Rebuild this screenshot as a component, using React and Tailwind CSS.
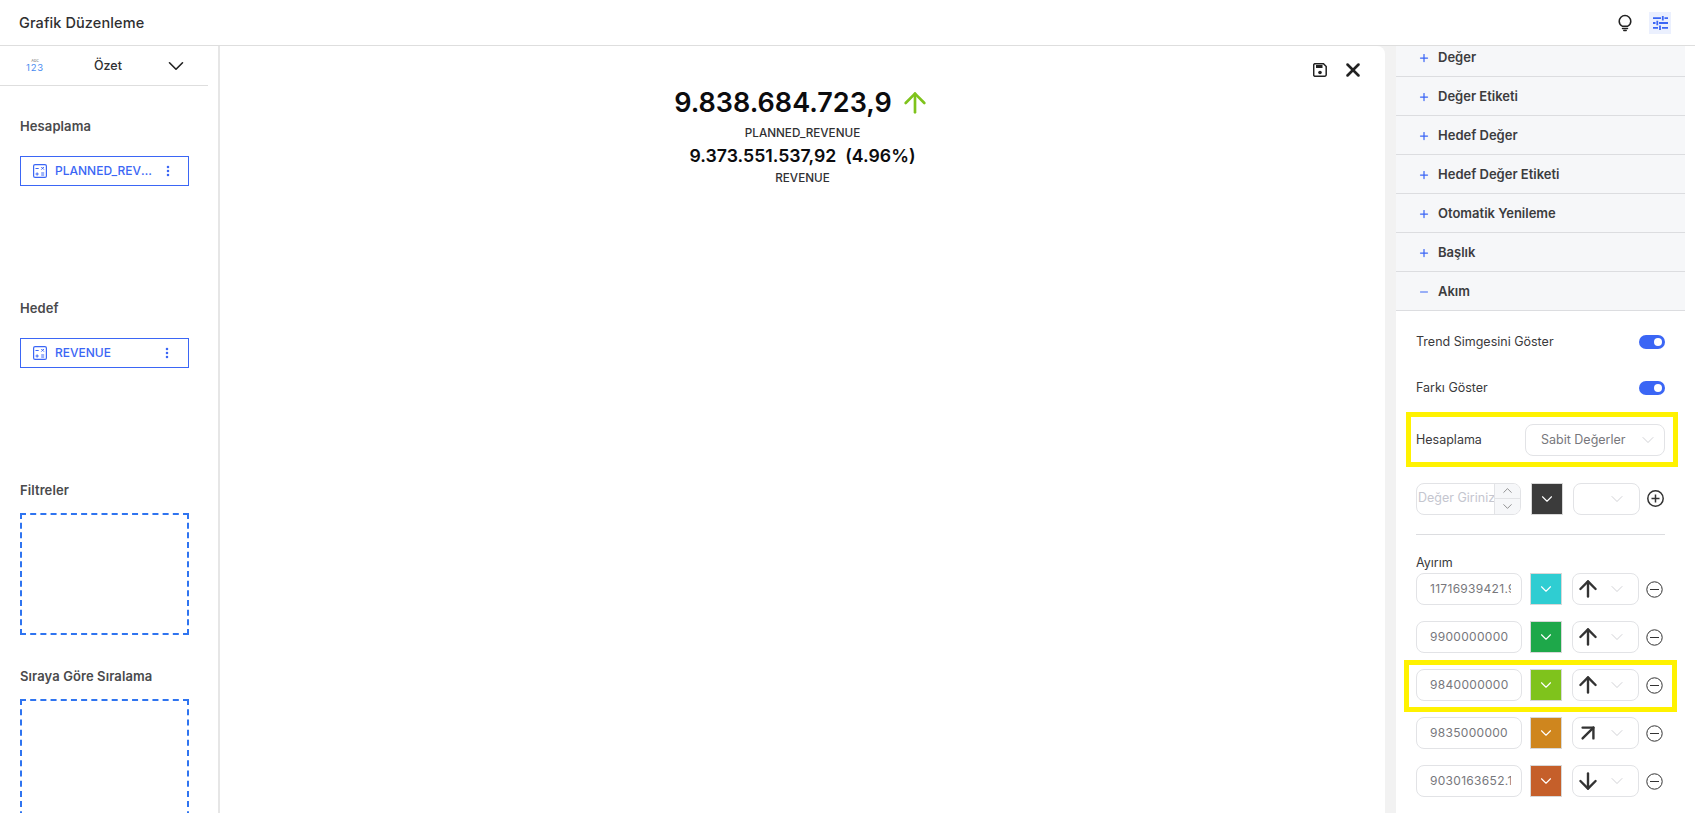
import React from 'react';
import { ChevronDown, Plus, Minus, ArrowUp, ArrowUpRight, ArrowDown, X, EllipsisVertical, ChevronUp } from 'lucide-react';

const CalcIcon = () => (
  <svg width="14" height="14" viewBox="0 0 14 14" fill="none" stroke="#3b66f5" strokeWidth="1">
    <rect x="0.6" y="0.6" width="12.8" height="12.8" rx="1.5" strokeWidth="1.2" />
    <path d="M2.5 4.5h3.200M8.300 3l2.600 2.600M10.900 3l-2.600 2.600M2.500 10h3.200M4.100 8.400v3.200M8.200 9h3M8.200 11h3" />
  </svg>
);

const BulbIcon = () => (
  <svg width="16" height="18" viewBox="0 0 16 18" fill="none" stroke="#222" strokeWidth="1.5">
    <path d="M5.200 12.200C3.400 11.200 2.200 9.400 2.200 7.300a5.800 5.800 0 0 1 11.600 0c0 2.100-1.200 3.900-3 4.900z" />
    <path d="M5.500 14.400h5M6.800 16.400h2.400" strokeLinecap="round" />
  </svg>
);

const TuneIcon = () => (
  <svg width="15" height="14" viewBox="0 0 15 14" fill="none" stroke="#3b66f5" strokeWidth="1.800">
    <path d="M0 2.200h8M11.500 2.200h3.500M9.800 0v4.400M0 7h2.500M6 7h9M4.300 4.800v4.400M0 11.800h5M9 11.800h6M7 9.600v4.400" />
  </svg>
);

const SaveIcon = () => (
  <svg width="14" height="14" viewBox="0 0 14 14" fill="none">
    <path d="M1.500 0.800h9l2.700 2.700v8.200a1.500 1.500 0 0 1-1.500 1.500h-10.200a1.500 1.500 0 0 1-0.800-1.500v-9.400a1.500 1.500 0 0 1 0.800-1.500z" stroke="#222" strokeWidth="1.500" />
    <path d="M3 2h6.500v3h-6.500z" fill="#222" />
    <circle cx="7" cy="9.500" r="1.800" fill="#222" />
  </svg>
);

const RoundIcon = ({ plus }) => (
  <svg width="17" height="17" viewBox="0 0 17 17" fill="none" stroke="#333" strokeWidth={plus ? 1.5 : 1}>
    <circle cx="8.500" cy="8.500" r="7.700" />
    <path d={plus ? 'M4.500 8.500h8M8.500 4.500v8' : 'M4 8.500h9'} />
  </svg>
);

const Accordion = ({ label, open, className }) => (
  <div className={`flex items-center border-b border-[#dcdde0] pl-[22px] ${className}`}>
    {open ? <Minus size={12} color="#3b66f5" strokeWidth={2} /> : <Plus size={12} color="#3b66f5" strokeWidth={2.500} />}
    <span className="ml-[8px] text-[13px] font-semibold text-[#3c3c3e]">{label}</span>
  </div>
);

const ThresholdRow = ({ value, color, Icon }) => (
  <div className="flex items-center h-[32px] mb-[16px]">
    <div className="w-[106px] h-[32px] border border-[#e2e3e6] rounded-[8px] flex items-center pl-[13px] pr-[10px] text-[12px] tracking-[0.3px] text-[#77777c] whitespace-nowrap">
      <span className="block overflow-hidden">{value}</span>
    </div>
    <div className={`ml-[8px] w-[32px] h-[32px] border border-[#d8d8d8] flex items-center justify-center ${color}`}>
      <ChevronDown size={18} color="#fff" strokeWidth={1.500} />
    </div>
    <div className="ml-[10px] w-[67px] h-[32px] border border-[#e2e3e6] rounded-[8px] flex items-center pl-[2px]">
      <Icon size={26} color="#333" strokeWidth={2.200} />
      <ChevronDown className="ml-[6px]" size={20} color="#c8c9ce" strokeWidth={1} />
    </div>
    <div className="ml-[7px]"><RoundIcon /></div>
  </div>
);

const Field = ({ label, className, children }) => (
  <div className={className}>
    <div className="text-[13px] font-semibold text-[#4a4a4c] leading-[20px] tracking-[0.1px]">{label}</div>
    {children}
  </div>
);

const ValueBox = ({ label, dotsClass }) => (
  <div className="mt-[20px] w-[169px] h-[30px] border border-[#3b66f5] flex items-center pl-[12px] text-[#3b66f5]">
    <CalcIcon />
    <span className="ml-[8px] text-[12px] font-medium w-[101px] truncate">{label}</span>
    <EllipsisVertical className={dotsClass} size={14} strokeWidth={2.400} />
  </div>
);

const DashedBox = ({ className }) => (
  <div className={`mt-[13px] w-[169px] border-2 border-dashed border-[#2f74f0] ${className}`} />
);

const App = () => {
  return (
    <div className="w-[1695px] h-[813px] overflow-hidden bg-white flex flex-col font-['Inter','Liberation_Sans',sans-serif]">
      <header className="h-[46px] shrink-0 border-b border-[#dedede] flex items-center pl-[19px] pr-[24px]">
        <h1 className="text-[14.500px] font-medium text-[#2f2f31] tracking-[0.1px]">Grafik Düzenleme</h1>
        <div className="ml-auto flex items-center gap-[16px]">
          <BulbIcon />
          <div className="w-[22px] h-[22px] bg-[#ebf0fe] flex items-center justify-center"><TuneIcon /></div>
        </div>
      </header>

      <div className="flex flex-1 min-h-0">
        <aside className="w-[220px] shrink-0 border-r-2 border-[#e6e6e6] overflow-hidden">
          <div className="w-[208px] h-[40px] border-b border-[#dedede] flex items-center">
            <div className="ml-[26px] w-[18px] flex flex-col items-center leading-none text-[#4a8cf0]">
              <span className="text-[4px] text-[#777]">Abc</span>
              <span className="text-[9.500px] tracking-[0.8px]">123</span>
            </div>
            <span className="ml-[50px] w-[69px] pt-[2px] text-[12.500px] font-medium text-[#303032]">Özet</span>
            <ChevronDown size={26} color="#222" strokeWidth={1.500} />
          </div>
          <div className="pl-[20px]">
            <Field label="Hesaplama" className="mt-[30px] h-[182px]">
              <ValueBox label="PLANNED_REVENUE" dotsClass="ml-[5px]" />
            </Field>
            <Field label="Hedef" className="h-[182px]">
              <ValueBox label="REVENUE" dotsClass="ml-[4px]" />
            </Field>
            <Field label="Filtreler" className="h-[186px]">
              <DashedBox className="h-[122px]" />
            </Field>
            <Field label="Sıraya Göre Sıralama">
              <DashedBox className="h-[200px]" />
            </Field>
          </div>
        </aside>

        <div className="flex-1 flex bg-[#f2f2f2] pr-[11px]">
          <main className="flex-1 relative bg-white rounded-tr-[8px] flex flex-col items-center pt-[36px]">
            <div className="flex items-center h-[42px]">
              <span className="text-[27px] font-semibold text-[#0c0c0e]">9.838.684.723,9</span>
              <ArrowUp className="ml-[7px]" size={32} color="#7fc31c" strokeWidth={2} />
            </div>
            <div className="text-[11.700px] font-medium text-[#303032] leading-[18px]">PLANNED_REVENUE</div>
            <div className="mt-[1px] text-[17.700px] font-semibold text-[#0c0c0e] leading-[26px]">9.373.551.537,92&nbsp; (4.96%)</div>
            <div className="text-[11.700px] font-medium text-[#303032] leading-[18px]">REVENUE</div>
            <div className="absolute top-[13px] right-[21px] flex items-center gap-[15px]">
              <SaveIcon />
              <X size={22} color="#222" strokeWidth={2.800} />
            </div>
          </main>
        </div>

        <section className="w-[289px] shrink-0 relative overflow-hidden mr-[10px]">
          <div className="bg-[#f6f7f9]">
            <Accordion label="Değer" className="h-[31px] pb-[6px]" />
            <Accordion label="Değer Etiketi" className="h-[39px] pt-[1px]" />
            <Accordion label="Hedef Değer" className="h-[39px] pt-[1px]" />
            <Accordion label="Hedef Değer Etiketi" className="h-[39px] pt-[1px]" />
            <Accordion label="Otomatik Yenileme" className="h-[39px] pt-[1px]" />
            <Accordion label="Başlık" className="h-[39px] pt-[1px]" />
            <Accordion label="Akım" open className="h-[39px] pt-[1px]" />
          </div>

          <div className="pl-[20px] pr-[20px] text-[12.500px] text-[#3a3a3c]">
            <div className="h-[46px] mt-[8px] flex items-center justify-between">
              <span>Trend Simgesini Göster</span>
              <div className="w-[26px] h-[14px] rounded-full bg-[#3b66f5] flex items-center justify-end pr-[3px]">
                <div className="w-[8px] h-[8px] rounded-full bg-white" />
              </div>
            </div>
            <div className="h-[46px] flex items-center justify-between">
              <span>Farkı Göster</span>
              <div className="w-[26px] h-[14px] rounded-full bg-[#3b66f5] flex items-center justify-end pr-[3px]">
                <div className="w-[8px] h-[8px] rounded-full bg-white" />
              </div>
            </div>
            <div className="h-[32px] mt-[13px] flex items-center justify-between">
              <span>Hesaplama</span>
              <div className="w-[140px] h-[32px] border border-[#e2e3e6] rounded-[8px] flex items-center pl-[15px] text-[12.500px] text-[#77777c]">
                <span className="w-[97px]">Sabit Değerler</span>
                <ChevronDown size={20} color="#c8c9ce" strokeWidth={1} />
              </div>
            </div>

            <div className="h-[33px] mt-[26px] flex items-center">
              <div className="w-[105px] h-[32px] border border-[#e2e3e6] rounded-[8px] flex items-center pl-[1px] overflow-hidden text-[12.500px] text-[#c5c6cf]">
                <span className="w-[77px] overflow-hidden whitespace-nowrap">Değer Giriniz</span>
                <div className="w-[26px] h-full bg-[#f6f7f9] border-l border-[#e2e3e6] flex flex-col">
                  <div className="h-[15px] flex items-center justify-center border-b border-[#e2e3e6]"><ChevronUp size={15} color="#555" strokeWidth={1} /></div>
                  <div className="h-[15px] flex items-center justify-center"><ChevronDown size={15} color="#555" strokeWidth={1} /></div>
                </div>
              </div>
              <div className="ml-[10px] w-[32px] h-[32px] border border-[#d8d8d8] bg-[#3b3b3b] flex items-center justify-center">
                <ChevronDown size={18} color="#fff" strokeWidth={1.500} />
              </div>
              <div className="ml-[10px] w-[67px] h-[32px] border border-[#e2e3e6] rounded-[8px] flex items-center justify-end pr-[12px]">
                <ChevronDown size={20} color="#c8c9ce" strokeWidth={1} />
              </div>
              <div className="ml-[7px]"><RoundIcon plus /></div>
            </div>

            <div className="h-px w-[249px] bg-[#dcdde0] mt-[19px]" />
            <div className="mt-[20px] h-[16px] leading-[16px]">Ayırım</div>
            <div className="mt-[2px]">
              <ThresholdRow value="11716939421.9" color="bg-[#2fcdd2]" Icon={ArrowUp} />
              <ThresholdRow value="9900000000" color="bg-[#1ea84a]" Icon={ArrowUp} />
              <ThresholdRow value="9840000000" color="bg-[#7fc31c]" Icon={ArrowUp} />
              <ThresholdRow value="9835000000" color="bg-[#cf861e]" Icon={ArrowUpRight} />
              <ThresholdRow value="9030163652.1" color="bg-[#c55f2a]" Icon={ArrowDown} />
            </div>
          </div>

          <div className="absolute left-[10px] top-[366px] w-[272px] h-[55px] border-[5px] border-[#fff200]" />
          <div className="absolute left-[8px] top-[614px] w-[273px] h-[52px] border-[5px] border-[#fff200]" />
        </section>
      </div>
    </div>
  );
};

export default App;
